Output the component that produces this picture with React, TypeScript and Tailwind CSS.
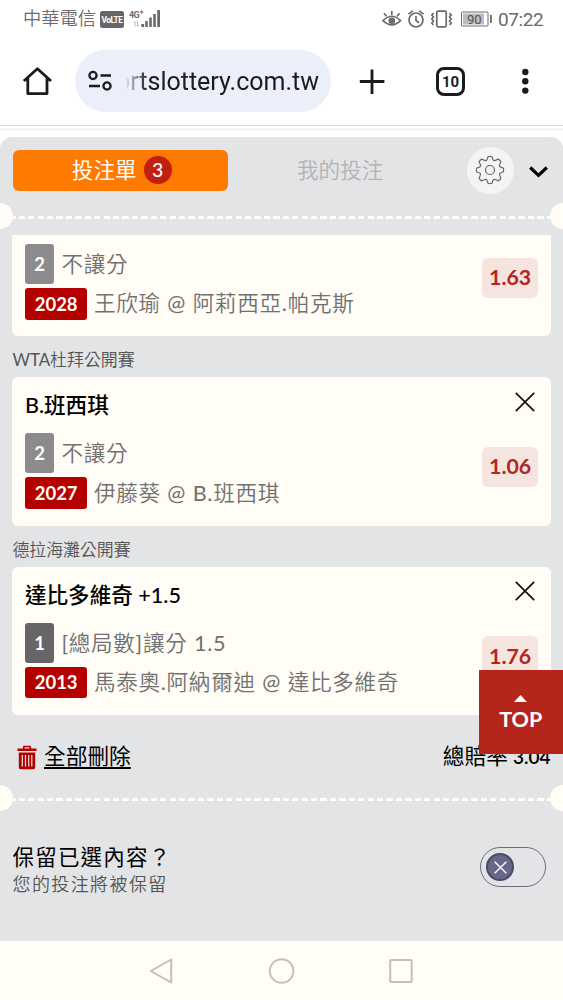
const bets = [
  {
    id: 1,
    liga: "",
    judul: "",
    pilihan: "2",
    jenis: "不讓分",
    kode: "2028",
    laga: "王欣瑜 @ 阿莉西亞.帕克斯",
    odds: "1.63",
  },
  {
    id: 2,
    liga: "WTA杜拜公開賽",
    judul: "B.班西琪",
    pilihan: "2",
    jenis: "不讓分",
    kode: "2027",
    laga: "伊藤葵 @ B.班西琪",
    odds: "1.06",
  },
  {
    id: 3,
    liga: "德拉海灘公開賽",
    judul: "達比多維奇 +1.5",
    pilihan: "1",
    jenis: "[總局數]讓分 1.5",
    kode: "2013",
    laga: "馬泰奧.阿納爾迪 @ 達比多維奇",
    odds: "1.76",
  },
];

// Huruf latin dibuat normal, huruf Tionghoa tetap tipis
function TeksTipis({ teks }: { teks: string }) {
  return (
    <span className="whitespace-pre font-[350]">
      {teks.split(/([\x21-\x7e]+)/).map((bagian, i) =>
        i % 2 === 1 ? (
          <span key={i} className="font-normal">{bagian}</span>
        ) : (
          bagian
        )
      )}
    </span>
  );
}

function StatusBar() {
  return (
    <div className="flex h-[38px] items-center pl-[23px] pr-[18px] font-['Roboto','Noto_Sans_CJK_TC',sans-serif] text-[#6b6b6b]">
      <span className="w-[77px] whitespace-nowrap pt-px text-[18.3px] font-[350] leading-none">中華電信</span>
      <svg width="24" height="17" viewBox="0 0 24 17">
        <rect width="24" height="17" rx="2.5" fill="#666" />
        <text x="12" y="11.8" textAnchor="middle" fontSize="8.4" fontWeight="700" letterSpacing="-0.5" fill="white">VoLTE</text>
      </svg>
      <svg className="ml-[5px] overflow-visible" width="33" height="20" viewBox="0 0 33 20" fill="#6b6b6b">
        <text x="0" y="9" fontSize="9" fontWeight="700" letterSpacing="-0.7">4G</text>
        <path d="M11 3h3.4M12.7 1.3v3.4" stroke="#6b6b6b" strokeWidth="1" />
        <path d="M6 12.5v5M4.5 14L6 12.5M8.5 12.5v5l1.5-1.5" stroke="#bbb" strokeWidth="1" fill="none" />
        <rect x="12.3" y="15" width="2.8" height="3" />
        <rect x="16.2" y="12" width="2.6" height="6" />
        <rect x="20.2" y="8.5" width="2.6" height="9.5" />
        <rect x="24.2" y="5" width="2.6" height="13" />
        <rect x="28.2" y="1" width="2.8" height="17" />
      </svg>
      <svg className="ml-auto" width="110" height="20" viewBox="0 0 110 20" fill="none" stroke="#6b6b6b" strokeWidth="1.7">
        {/* mata */}
        <path d="M1 11.7Q10 2.8 18.5 11.7Q10 20 1 11.7Z" />
        <circle cx="9.8" cy="11.7" r="3.3" fill="#6b6b6b" stroke="none" />
        <path d="M9.8 6V2M4.5 7.3L2 4.2M15 7.3L17.6 4.2" />
        {/* alarm */}
        <circle cx="34" cy="11" r="7" />
        <path d="M34 7v4.5l3 2.2M26.5 5.2l4.2-3.4M41.5 5.2l-4.2-3.4" />
        {/* getar */}
        <rect x="54.8" y="2.2" width="9.4" height="15.6" rx="1.2" />
        <path d="M51.5 4l-1.7 2 1.7 2-1.7 2 1.7 2-1.7 2 1.5 2M67.5 4l1.7 2-1.7 2 1.7 2-1.7 2 1.7 2-1.5 2" />
        {/* baterai */}
        <rect x="79.5" y="3" width="26.5" height="14" rx="1" strokeWidth="1" />
        <rect x="81" y="4.5" width="21" height="11" fill="#bdbdbd" stroke="none" />
        <rect x="108" y="6" width="1.8" height="8" fill="#6b6b6b" stroke="none" />
        <text x="85" y="14.5" fontSize="13" fill="#555" stroke="none">90</text>
      </svg>
      <span className="ml-[6px] w-[47px] text-[19px] leading-none tracking-[-0.4px]">07:22</span>
    </div>
  );
}

function BrowserBar() {
  return (
    <div className="flex h-[88px] items-start border-b border-[#d9d9dc] pt-3 text-[#1b1b1f]">
      <svg className="ml-[22px] mt-[15px]" width="31" height="32" viewBox="0 0 31 32" fill="none" stroke="currentColor" strokeWidth="2.8" strokeLinejoin="round">
        <path d="M1.8 16L15.4 3.8L29 16M5.8 13V28.6H25V13" />
      </svg>
      <div className="ml-[22px] flex h-[62px] w-64 items-center rounded-full bg-[#ebeffa] pl-3">
        <svg width="26" height="24" viewBox="0 0 26 24" fill="none" stroke="currentColor" strokeWidth="2.3">
          <circle cx="6" cy="6.5" r="3.6" />
          <path d="M13.5 6.5H24M2 17H13" />
          <circle cx="20" cy="17" r="3.6" />
        </svg>
        <div className="flex w-[206px] justify-end whitespace-nowrap pt-px [mask-image:linear-gradient(to_right,transparent_12px,black_34px)] font-['Roboto',sans-serif] text-[25px] leading-[32px]">
          <span>ortslottery.com.tw</span>
        </div>
      </div>
      <svg className="ml-[27px] mt-[18px]" width="28" height="28" viewBox="0 0 28 28" stroke="currentColor" strokeWidth="2.8">
        <path d="M14 1.5V26M1.8 13.5H26.4" />
      </svg>
      <div className="ml-[50px] mt-[17px] flex h-[29px] w-[29px] items-center justify-center rounded-[8px] border-[3px] border-[#1b1b1f] pt-px font-['Roboto',sans-serif] text-[15px] font-bold leading-none">
        10
      </div>
      <svg className="ml-[56px] mt-[17px]" width="9" height="29" viewBox="0 0 9 29" fill="currentColor">
        <circle cx="4.3" cy="5" r="3.2" />
        <circle cx="4.3" cy="14.3" r="3.2" />
        <circle cx="4.3" cy="23.6" r="3.2" />
      </svg>
    </div>
  );
}

// Garis putus-putus dengan lubang di kiri dan kanan
function Sobekan() {
  return (
    <div className="flex h-[26px] items-center justify-between overflow-hidden">
      <span className="h-[26px] w-[13px] shrink-0 rounded-r-full bg-[#fffdf5]" />
      <span className="mt-[3px] h-[3px] flex-1 bg-[repeating-linear-gradient(to_right,#fffdf5_0_2.5px,transparent_2.5px_5.7px,#fffdf5_5.7px_9.43px)]" />
      <span className="h-[26px] w-[13px] shrink-0 rounded-l-full bg-[#fffdf5]" />
    </div>
  );
}

export default function App() {
  return (
    <div className="relative flex h-[1000px] w-[563px] flex-col overflow-hidden bg-white font-['Lato','Noto_Sans_CJK_TC',sans-serif] text-black">
      <StatusBar />
      <BrowserBar />
      <div className="mt-[2px] h-[3px] bg-[#f5f5f7]" />

      <div className="mt-[6px] flex h-[804px] flex-col rounded-t-[12px] bg-[#e3e4e6]">
        {/* Tab */}
        <div className="flex h-[66px] items-center pl-[12.5px]">
          <div className="flex h-[41px] w-[215.5px] items-center justify-center gap-[7px] rounded-[6px] bg-[#ff7a00] pl-[3px] text-[21.6px] leading-none text-[#fffdf5]">
            <span className="pt-[2px]">投注單</span>
            <span className="flex h-7 w-7 items-center justify-center rounded-full bg-[#c21f14] text-[19.5px] font-medium">3</span>
          </div>
          <span className="ml-[69px] w-[169.5px] pt-[2px] text-[21.6px] font-[350] leading-none text-[#b3b3b5]">我的投注</span>
          <span className="flex h-[47px] w-[47px] items-center justify-center rounded-full bg-[#f3f4f6]">
            <svg width="30" height="30" viewBox="-15 -15 30 30" fill="none" stroke="#666" strokeWidth="1.2" strokeLinejoin="round">
              <path d="M-2 -13.3Q0 -14 2 -13.3Q2.6 -10.2 3.6 -9.6Q5 -9 8.3 -10.9Q10 -10 10.9 -8.3Q9 -5 9.6 -3.6Q10.2 -2.6 13.3 -2Q14 0 13.3 2Q10.2 2.6 9.6 3.6Q9 5 10.9 8.3Q10 10 8.3 10.9Q5 9 3.6 9.6Q2.6 10.2 2 13.3Q0 14 -2 13.3Q-2.6 10.2 -3.6 9.6Q-5 9 -8.3 10.9Q-10 10 -10.9 8.3Q-9 5 -9.6 3.6Q-10.2 2.6 -13.3 2Q-14 0 -13.3 -2Q-10.2 -2.6 -9.6 -3.6Q-9 -5 -10.9 -8.3Q-10 -10 -8.3 -10.9Q-5 -9 -3.6 -9.6Q-2.6 -10.2 -2 -13.3Z" />
              <circle r="4.5" />
            </svg>
          </span>
          <svg className="ml-[15px] mt-[3px]" width="19" height="12" viewBox="0 0 19 12" fill="none" stroke="black" strokeWidth="3.2">
            <path d="M1.2 1.5L9.5 9.3L17.8 1.5" />
          </svg>
        </div>

        <Sobekan />

        {/* Daftar taruhan */}
        <div className="mt-[6px] flex flex-col px-[12.4px]">
          {bets.map((item) => (
            <div key={item.id}>
              {item.liga && (
                <p className="flex h-[41.3px] items-center pt-[8px] text-[16.9px] leading-none text-[#555]">
                  <TeksTipis teks={item.liga} />
                </p>
              )}
              <div className={item.judul ? "h-[148.3px] rounded-[6px] bg-[#fffdf5] px-[12.5px]" : "h-[101px] rounded-b-[6px] bg-[#fffdf5] px-[12.5px] pt-[9px]"}>
                {item.judul && (
                  <div className="flex h-[56px] items-center justify-between pr-[3.5px]">
                    <p className="pt-px text-[21.6px] font-medium leading-none">{item.judul}</p>
                    <svg className="-mt-[7px]" width="20" height="20" viewBox="0 0 20 20" stroke="#111" strokeWidth="1.7">
                      <path d="M0.8 0.8L19.2 19.2M19.2 0.8L0.8 19.2" />
                    </svg>
                  </div>
                )}
                <div className="flex justify-between text-[21.6px] leading-none tracking-[0.7px] text-[#707070]">
                  <div>
                    <div className="flex h-10 items-center gap-[7px]">
                      <span className={item.pilihan === "1" ? "flex h-10 w-[29.5px] items-center justify-center rounded-[3px] bg-[#666] text-[18.5px] font-bold tracking-normal text-white" : "flex h-10 w-[29.5px] items-center justify-center rounded-[3px] bg-[#8b8b8b] text-[18.5px] font-bold tracking-normal text-white"}>
                        {item.pilihan}
                      </span>
                      <span className="pt-px">
                        <TeksTipis teks={item.jenis} />
                      </span>
                    </div>
                    <div className="mt-1 flex h-[31.5px] items-center gap-[6.5px]">
                      <span className="flex h-[31.5px] w-[62.5px] items-center justify-center rounded-[3px] bg-[#b50000] text-[18.5px] font-bold tracking-normal text-[#fffdf5]">
                        {item.kode}
                      </span>
                      <span className="pt-px">
                        <TeksTipis teks={item.laga} />
                      </span>
                    </div>
                  </div>
                  <span className="mt-[13.5px] flex h-[40.5px] w-14 items-center justify-center rounded-[6px] bg-[#f6e4df] text-[21.3px] font-bold tracking-normal text-[#b3261e]">
                    {item.odds}
                  </span>
                </div>
              </div>
            </div>
          ))}
        </div>

        {/* Hapus semua */}
        <div className="flex h-[69.8px] items-center justify-between pl-[17px] pr-[12.5px] pt-[14px] text-[21.7px] leading-none">
          <div className="flex items-center gap-[7px]">
            <svg width="20" height="25" viewBox="0 0 20 25" fill="#b50000">
              <path fillRule="evenodd" d="M0.5 3.5H6V1.7Q6 0.8 7 0.8H13Q14 0.8 14 1.7V3.5H19.5V6H0.5ZM7.6 2.3V3.5H12.4V2.3ZM1.8 7.5H18.2V22.5Q18.2 24.2 16.5 24.2H3.5Q1.8 24.2 1.8 22.5ZM4.7 10V21.5H5.9V10ZM7.9 10V21.5H9.1V10ZM11.1 10V21.5H12.3V10ZM14.2 10V21.5H15.4V10Z" />
            </svg>
            <span className="underline decoration-[1.5px] underline-offset-[3px]">全部刪除</span>
          </div>
          <span className="flex items-baseline gap-[5px]">
            總賠率 <span className="text-[19px] font-semibold">3.04</span>
          </span>
        </div>

        <Sobekan />

        {/* Simpan pilihan */}
        <div className="flex items-start justify-between pl-[12.5px] pr-[17px] pt-[33px]">
          <div>
            <p className="mt-px h-[28px] text-[21.5px] leading-[24px] tracking-[1.2px]">保留已選內容？</p>
            <p className="text-[18px] font-[350] leading-[22px] tracking-[1.4px] text-[#555]">您的投注將被保留</p>
          </div>
          <span className="mt-[3px] flex h-[40.5px] w-[66px] items-center rounded-full border-[1.5px] border-[#6d6b80] pl-[5px]">
            <span className="flex h-[28px] w-[28px] items-center justify-center rounded-full border-2 border-[#4b4968] bg-[#68678a]">
              <svg width="13" height="13" viewBox="0 0 13 13" stroke="white" strokeWidth="1.4">
                <path d="M0.7 0.7L12.3 12.3M12.3 0.7L0.7 12.3" />
              </svg>
            </span>
          </span>
        </div>
      </div>

      {/* Navigasi bawah */}
      <div className="flex h-[59px] items-center bg-[#fffdf5] pl-[149px]">
        <svg width="265" height="28" viewBox="0 0 265 28" fill="none" stroke="#c3bfbb" strokeWidth="2" strokeLinejoin="round">
          <path d="M1.8 14L22.2 2.5V25.5Z" />
          <circle cx="132.6" cy="14" r="11.8" />
          <rect x="241.2" y="3" width="21.5" height="22" rx="1" />
        </svg>
      </div>

      {/* Tombol kembali ke atas */}
      <div className="absolute left-[478.5px] top-[670px] flex h-[84px] w-[84.5px] flex-col items-center bg-[#b5251c] pt-[25px] text-white">
        <svg width="13" height="7" viewBox="0 0 13 7" fill="white">
          <path d="M0 7L6.5 0L13 7Z" />
        </svg>
        <span className="mt-[5px] text-[21.5px] font-bold leading-[24px]">TOP</span>
      </div>
    </div>
  );
}
